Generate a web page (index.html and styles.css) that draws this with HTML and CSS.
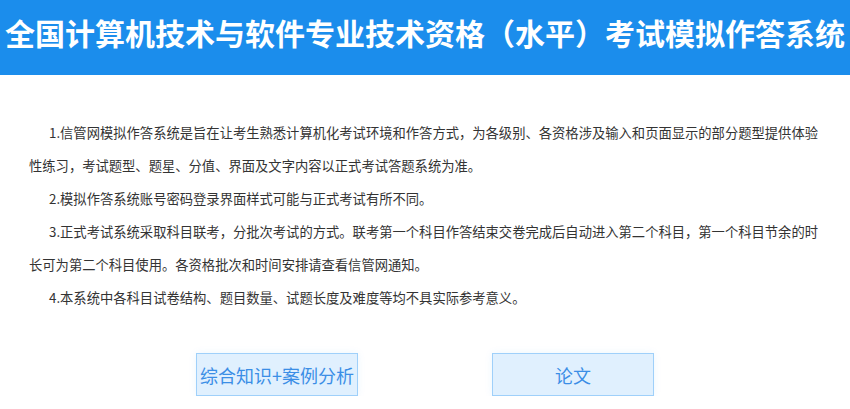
FILE: index.html
```html
<!DOCTYPE html>
<html lang="zh-CN">
<head>
<meta charset="utf-8">
<title>全国计算机技术与软件专业技术资格（水平）考试模拟作答系统</title>
<link rel="stylesheet" href="styles.css">
</head>
<body>
<header class="header">
  <h1 class="title">全国计算机技术与软件专业技术资格（水平）考试模拟作答系统</h1>
</header>
<main class="notes">
  <p class="note">1.信管网模拟作答系统是旨在让考生熟悉计算机化考试环境和作答方式，为各级别、各资格涉及输入和页面显示的部分题型提供体验性练习，考试题型、题星、分值、界面及文字内容以正式考试答题系统为准。</p>
  <p class="note">2.模拟作答系统账号密码登录界面样式可能与正式考试有所不同。</p>
  <p class="note">3.正式考试系统采取科目联考，分批次考试的方式。联考第一个科目作答结束交卷完成后自动进入第二个科目，第一个科目节余的时长可为第二个科目使用。各资格批次和时间安排请查看信管网通知。</p>
  <p class="note">4.本系统中各科目试卷结构、题目数量、试题长度及难度等均不具实际参考意义。</p>
</main>
<div class="actions">
  <button class="btn">综合知识+案例分析</button>
  <button class="btn">论文</button>
</div>
</body>
</html>
```

FILE: styles.css
```css
html, body {
  margin: 0;
  padding: 0;
  background: #ffffff;
}
body {
  font-family: "Noto Sans CJK SC", "Noto Sans", sans-serif;
  color: #333333;
}
.header {
  height: 75px;
  background: #1b8dec;
  display: flex;
  justify-content: center;
  padding-top: 14px;
  box-sizing: border-box;
}
.title {
  margin: 0;
  color: #ffffff;
  font-size: 30px;
  font-weight: 700;
  line-height: 36px;
  white-space: nowrap;
  letter-spacing: 0;
}
.notes {
  padding: 41px 24px 0 29px;
}
.note {
  margin: 0;
  font-size: 13.3px;
  line-height: 33px;
  text-indent: 20px;
  color: #333333;
}
.actions {
  display: flex;
  justify-content: center;
  gap: 134px;
  margin-top: 39px;
}
.btn {
  width: 162px;
  height: 43px;
  box-sizing: border-box;
  border: 1px solid #9fd0fa;
  background: #e0f0fe;
  color: #3b8ee6;
  font-family: "Noto Sans CJK SC", "Noto Sans", sans-serif;
  font-size: 18px;
  padding: 0;
  box-shadow: 0 0 8px rgba(30, 140, 236, 0.08);
}
```
